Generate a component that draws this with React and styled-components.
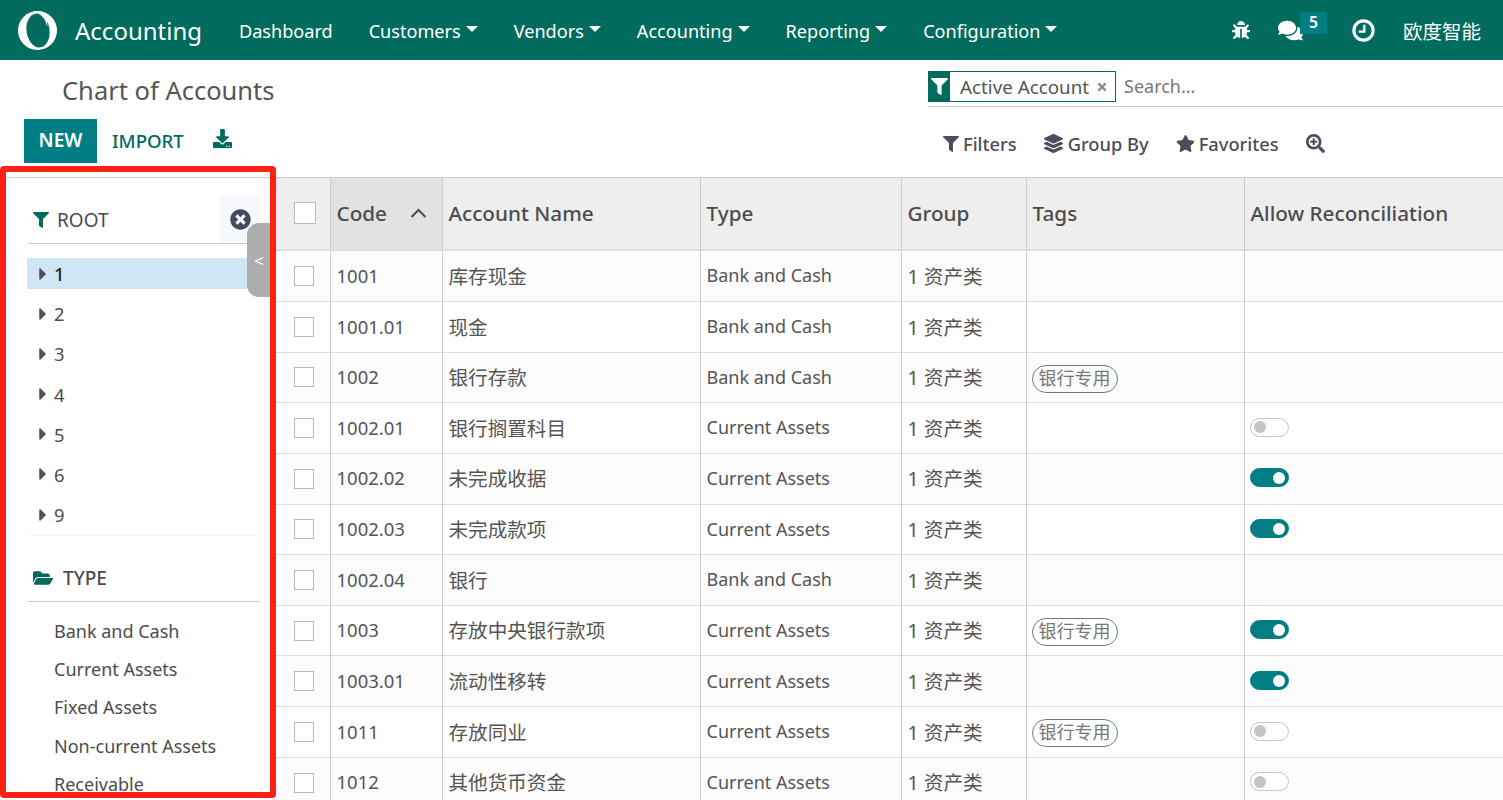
import React from 'react';
import styled, { createGlobalStyle } from 'styled-components';
import {
  FaBug,
  FaCaretRight,
  FaComments,
  FaDownload,
  FaFilter,
  FaFolderOpen,
  FaLayerGroup,
  FaSearchPlus,
  FaStar,
  FaTimes,
  FaTimesCircle,
} from 'react-icons/fa';

const GlobalStyle = createGlobalStyle`
  html, body {
    margin: 0;
    height: 800px;
    overflow: hidden;
    background: #fff;
  }
  body, input {
    font-family: "Noto Sans", "Noto Sans CJK SC", sans-serif;
    color: #4c4c4c;
  }
  * { box-sizing: border-box; }
`;

const Page = styled.div`
  position: relative;
  width: 1503px;
  height: 800px;
  overflow: hidden;
`;

const Navbar = styled.header`
  height: 60px;
  background: #016b5d;
  color: #fff;
  display: flex;
  align-items: center;
  padding-left: 17px;
`;

const Brand = styled.div`
  display: flex;
  align-items: center;
  gap: 17px;
  font-size: 24px;
  margin-right: 37px;
`;

const NavMenu = styled.nav`
  display: flex;
  gap: 36px;
  margin-top: 1px;
  font-size: 18.1px;
`;

const NavItem = styled.span`
  display: flex;
  align-items: center;
  &::after {
    content: ${(p) => (p.$caret ? '""' : 'none')};
    margin-left: 5px;
    margin-top: -4px;
    border-top: 6px solid #fff;
    border-left: 6px solid transparent;
    border-right: 6px solid transparent;
  }
`;

const NavRight = styled.div`
  margin-left: auto;
  display: flex;
  align-items: center;
  padding-right: 22px;
  font-size: 19.5px;
`;

const ChatIcon = styled.span`
  position: relative;
  display: flex;
  margin: 0 49px 0 28px;
`;

const Badge = styled.span`
  position: absolute;
  left: 22px;
  top: -6px;
  width: 27px;
  height: 22px;
  background: #017e84;
  font-size: 16px;
  font-weight: 600;
  line-height: 21px;
  text-align: center;
`;

const UserName = styled.span`
  margin-left: 28px;
`;

const ControlPanel = styled.section`
  height: 117px;
  display: flex;
  justify-content: space-between;
`;

const PanelLeft = styled.div`
  padding-left: 24px;
`;

const Title = styled.h1`
  margin: 0 0 0 38px;
  padding-top: 11px;
  height: 59px;
  font-size: 25.5px;
  font-weight: 400;
  line-height: 38px;
  color: #555;
`;

const Buttons = styled.div`
  display: flex;
  align-items: center;
  color: #016b5d;
`;

const PrimaryButton = styled.button`
  width: 73px;
  height: 44px;
  padding: 0 0 2px;
  border: 0;
  background: #017e84;
  color: #fff;
  font: 600 19px "Noto Sans", sans-serif;
`;

const LinkButton = styled.span`
  margin: -2px 29px 0 15px;
  font-size: 18.6px;
  font-weight: 500;
`;

const DownloadIcon = styled(FaDownload)`
  font-size: 19px;
  margin-top: -6px;
`;

const PanelRight = styled.div`
  width: 575px;
`;

const SearchBar = styled.div`
  margin-top: 11px;
  height: 36px;
  display: flex;
  align-items: flex-start;
  border-bottom: 1px solid #ccc;
`;

const Facet = styled.div`
  display: flex;
  align-items: center;
  height: 31px;
  width: 188px;
  border: 1px solid #016b5d;
  font-size: 18.8px;
  color: #555;
`;

const FacetIcon = styled.span`
  width: 22px;
  height: 31px;
  margin: 0 10px 0 -1px;
  background: #016b5d;
  color: #fff;
  display: flex;
  align-items: center;
  justify-content: center;
  font-size: 17px;
`;

const FacetClose = styled(FaTimes)`
  margin-left: 7px;
  font-size: 12px;
  color: #888;
`;

const SearchInput = styled.input`
  border: 0;
  outline: 0;
  flex: 1;
  height: 30px;
  padding: 0 0 0 8px;
  font-size: 18px;
  &::placeholder { color: #777; opacity: 1; }
`;

const SearchTools = styled.div`
  display: flex;
  align-items: center;
  gap: 27px;
  margin: 24px 0 0 15px;
  font-size: 18.3px;
  font-weight: 500;
  color: #4c4c5c;
`;

const Tool = styled.span`
  display: flex;
  align-items: center;
  gap: ${(p) => p.$gap || 4}px;
  svg { font-size: ${(p) => p.$icon || 17}px; }
`;

const Main = styled.main`
  display: flex;
  height: 623px;
`;

const Sidebar = styled.aside`
  position: relative;
  flex: 0 0 275px;
  height: 623px;
  overflow: hidden;
  border-top: 1px solid #ccc;
  padding: 18px 15px 0 27px;
`;

const SectionHead = styled.div`
  display: flex;
  align-items: center;
  height: 48px;
  border-bottom: 1px solid #ccc;
  padding-left: 6px;
  font-size: 19px;
  color: #4c4c4c;
  font-weight: ${(p) => (p.$bold ? 500 : 400)};
  svg { color: #016b5d; }
`;

const HeadLabel = styled.span`
  margin-left: ${(p) => p.$gap}px;
`;

const ClearBox = styled.span`
  margin-left: auto;
  width: 40px;
  height: 47px;
  background: #f7f8fb;
  display: flex;
  align-items: center;
  justify-content: center;
  svg { color: #454a5a; font-size: 21px; }
`;

const Tree = styled.ul`
  list-style: none;
  margin: 14px 0 0;
  padding: 0;
  height: 278px;
  border-bottom: 1px solid #f5f5f5;
`;

const TreeItem = styled.li`
  height: 31px;
  width: 223px;
  margin-bottom: 9.2px;
  display: flex;
  align-items: center;
  padding-left: 6px;
  font-size: 18.4px;
  background: ${(p) => (p.$active ? '#cfe6f5' : 'transparent')};
  color: ${(p) => (p.$active ? '#222' : '#4c4c4c')};
  font-weight: ${(p) => (p.$active ? 500 : 400)};
  svg { color: #4c5060; font-size: 20px; margin-right: 1px; }
`;

const TypeSection = styled.div`
  margin-top: 18px;
`;

const TypeList = styled.ul`
  list-style: none;
  margin: 10px 0 0;
  padding: 0 0 0 27px;
`;

const TypeItem = styled.li`
  height: 38.2px;
  line-height: 38px;
  font-size: 18px;
  color: #4c4c4c;
`;

const CollapseHandle = styled.div`
  position: absolute;
  left: 247px;
  top: 45px;
  width: 24px;
  height: 74px;
  border-radius: 12px 0 0 12px;
  background: #adadad;
  color: #fff;
  display: flex;
  align-items: center;
  justify-content: center;
  font-size: 17px;
`;

const RedFrame = styled.div`
  position: absolute;
  left: 0;
  top: 166px;
  width: 276px;
  height: 632px;
  border: 6px solid #ff2016;
  border-radius: 4px;
  pointer-events: none;
`;

const Table = styled.table`
  flex: 1;
  height: min-content;
  table-layout: fixed;
  border-collapse: collapse;
  font-size: 18px;
  color: #555;
`;

const HeadRow = styled.tr`
  height: 72px;
  background: #eee;
  border-top: 1px solid #ccc;
  border-bottom: 2px solid #ddd;
`;

const Th = styled.th`
  width: ${(p) => p.$w}px;
  padding: 0 6px;
  text-align: left;
  font-size: 20.7px;
  font-weight: 500;
  color: #4c4c4c;
  border-left: 1px solid #ccc;
  background: ${(p) => (p.$sorted ? '#e2e2e2' : 'transparent')};
`;

const HeadCode = styled.span`
  display: flex;
  justify-content: space-between;
  align-items: center;
  padding-right: 9px;
`;

const Row = styled.tr`
  height: 50.65px;
  background: ${(p) => (p.$even ? '#fcfcfc' : '#fff')};
  border-bottom: 1px solid #ddd;
  &:first-child { height: 52px; }
`;

const Td = styled.td`
  padding: 0 6px 1.5px;
  border-left: 1px solid #ccc;
  white-space: nowrap;
  font-size: ${(p) => p.$size || 18}px;
`;

const CheckCell = styled.td`
  padding: 0 0 0 19px;
`;

const CheckCellHead = styled.th`
  width: 55px;
  padding: 0 0 0 19px;
`;

const Checkbox = styled.span`
  display: block;
  width: ${(p) => (p.$head ? 22 : 20)}px;
  height: ${(p) => (p.$head ? 22 : 20)}px;
  border: 1px solid #bbb;
  background: #fff;
`;

const Tag = styled.span`
  display: block;
  width: fit-content;
  height: 28px;
  margin: 4px 0 0 -1px;
  line-height: 25px;
  padding: 0 6px;
  border: 1.5px solid #777;
  border-radius: 14px;
  font-size: 18px;
  color: #777;
`;

const Toggle = styled.span`
  display: block;
  position: relative;
  width: 39px;
  height: 19px;
  margin-left: -1px;
  border-radius: 10px;
  border: 1px solid ${(p) => (p.$on ? '#017e84' : '#c4c4c4')};
  background: ${(p) => (p.$on ? '#017e84' : '#fff')};
  &::after {
    content: "";
    position: absolute;
    top: 2.5px;
    left: ${(p) => (p.$on ? '22px' : '3px')};
    width: 12px;
    height: 12px;
    border-radius: 50%;
    background: ${(p) => (p.$on ? '#fff' : '#c4c4c4')};
  }
`;

const columns = [
  { label: 'Account Name', w: 258 },
  { label: 'Type', w: 201 },
  { label: 'Group', w: 125 },
  { label: 'Tags', w: 218 },
  { label: 'Allow Reconciliation', w: 259 },
];

const accounts = [
  { code: '1001', name: '库存现金', type: 'Bank and Cash' },
  { code: '1001.01', name: '现金', type: 'Bank and Cash' },
  { code: '1002', name: '银行存款', type: 'Bank and Cash', tag: true },
  { code: '1002.01', name: '银行搁置科目', type: 'Current Assets', toggle: 'off' },
  { code: '1002.02', name: '未完成收据', type: 'Current Assets', toggle: 'on' },
  { code: '1002.03', name: '未完成款项', type: 'Current Assets', toggle: 'on' },
  { code: '1002.04', name: '银行', type: 'Bank and Cash' },
  { code: '1003', name: '存放中央银行款项', type: 'Current Assets', tag: true, toggle: 'on' },
  { code: '1003.01', name: '流动性移转', type: 'Current Assets', toggle: 'on' },
  { code: '1011', name: '存放同业', type: 'Current Assets', tag: true, toggle: 'off' },
  { code: '1012', name: '其他货币资金', type: 'Current Assets', toggle: 'off' },
];

const rootCodes = ['1', '2', '3', '4', '5', '6', '9'];
const accountTypes = ['Bank and Cash', 'Current Assets', 'Fixed Assets', 'Non-current Assets', 'Receivable'];
const menus = ['Customers', 'Vendors', 'Accounting', 'Reporting', 'Configuration'];

function Logo() {
  return (
    <svg width="41" height="41" viewBox="0 0 41 41">
      <circle cx="20.5" cy="20.5" r="19.5" fill="#fff" />
      <ellipse cx="21" cy="20.5" rx="11.5" ry="17" fill="#016b5d" transform="rotate(-8 21 20.5)" />
      <path d="M21 3.5 C26 6 29.5 11 30 17 C31 13 30 8 27 3.5 C25 3 23 3 21 3.5Z" fill="#fff" />
    </svg>
  );
}

function ClockIcon() {
  return (
    <svg width="23" height="23" viewBox="0 0 22 22" fill="none" stroke="#fff">
      <circle cx="11" cy="11" r="9.2" strokeWidth="3" />
      <path d="M11.8 5.5 V12 H6.5" strokeWidth="2.2" />
    </svg>
  );
}

function App() {
  return (
    <Page>
      <GlobalStyle />
      <Navbar>
        <Brand>
          <Logo />
          Accounting
        </Brand>
        <NavMenu>
          <NavItem>Dashboard</NavItem>
          {menus.map((m) => (
            <NavItem key={m} $caret>{m}</NavItem>
          ))}
        </NavMenu>
        <NavRight>
          <FaBug size={18} />
          <ChatIcon>
            <FaComments size={25} />
            <Badge>5</Badge>
          </ChatIcon>
          <ClockIcon />
          <UserName>欧度智能</UserName>
        </NavRight>
      </Navbar>

      <ControlPanel>
        <PanelLeft>
          <Title>Chart of Accounts</Title>
          <Buttons>
            <PrimaryButton>NEW</PrimaryButton>
            <LinkButton>IMPORT</LinkButton>
            <DownloadIcon />
          </Buttons>
        </PanelLeft>
        <PanelRight>
          <SearchBar>
            <Facet>
              <FacetIcon><FaFilter /></FacetIcon>
              Active Account
              <FacetClose />
            </Facet>
            <SearchInput placeholder="Search..." />
          </SearchBar>
          <SearchTools>
            <Tool $icon={16}><FaFilter />Filters</Tool>
            <Tool $icon={19} $gap={5}><FaLayerGroup />Group By</Tool>
            <Tool $icon={19} $gap={4}><FaStar />Favorites</Tool>
            <Tool $icon={19}><FaSearchPlus /></Tool>
          </SearchTools>
        </PanelRight>
      </ControlPanel>

      <Main>
        <Sidebar>
          <SectionHead>
            <FaFilter size={16} />
            <HeadLabel $gap={8}>ROOT</HeadLabel>
            <ClearBox><FaTimesCircle /></ClearBox>
          </SectionHead>
          <Tree>
            {rootCodes.map((code, i) => (
              <TreeItem key={code} $active={i === 0}>
                <FaCaretRight />
                {code}
              </TreeItem>
            ))}
          </Tree>
          <TypeSection>
            <SectionHead $bold>
              <FaFolderOpen size={20} />
              <HeadLabel $gap={10}>TYPE</HeadLabel>
            </SectionHead>
            <TypeList>
              {accountTypes.map((t) => (
                <TypeItem key={t}>{t}</TypeItem>
              ))}
            </TypeList>
          </TypeSection>
          <CollapseHandle>&lt;</CollapseHandle>
        </Sidebar>

        <Table>
          <thead>
            <HeadRow>
              <CheckCellHead><Checkbox $head /></CheckCellHead>
              <Th $w={112} $sorted>
                <HeadCode>
                  Code
                  <svg width="17" height="10" viewBox="0 0 17 10" fill="none" stroke="#4c4c4c" strokeWidth="2">
                    <path d="M1.5 9 L8.5 2 L15.5 9" />
                  </svg>
                </HeadCode>
              </Th>
              {columns.map((c) => (
                <Th key={c.label} $w={c.w}>{c.label}</Th>
              ))}
            </HeadRow>
          </thead>
          <tbody>
            {accounts.map((a, i) => (
              <Row key={a.code} $even={i % 2 === 0}>
                <CheckCell><Checkbox /></CheckCell>
                <Td $size={18.5}>{a.code}</Td>
                <Td $size={19.6}>{a.name}</Td>
                <Td>{a.type}</Td>
                <Td $size={19.6}>1 资产类</Td>
                <Td>{a.tag && <Tag>银行专用</Tag>}</Td>
                <Td>{a.toggle && <Toggle $on={a.toggle === 'on'} />}</Td>
              </Row>
            ))}
          </tbody>
        </Table>
      </Main>

      <RedFrame />
    </Page>
  );
}

export default App;
